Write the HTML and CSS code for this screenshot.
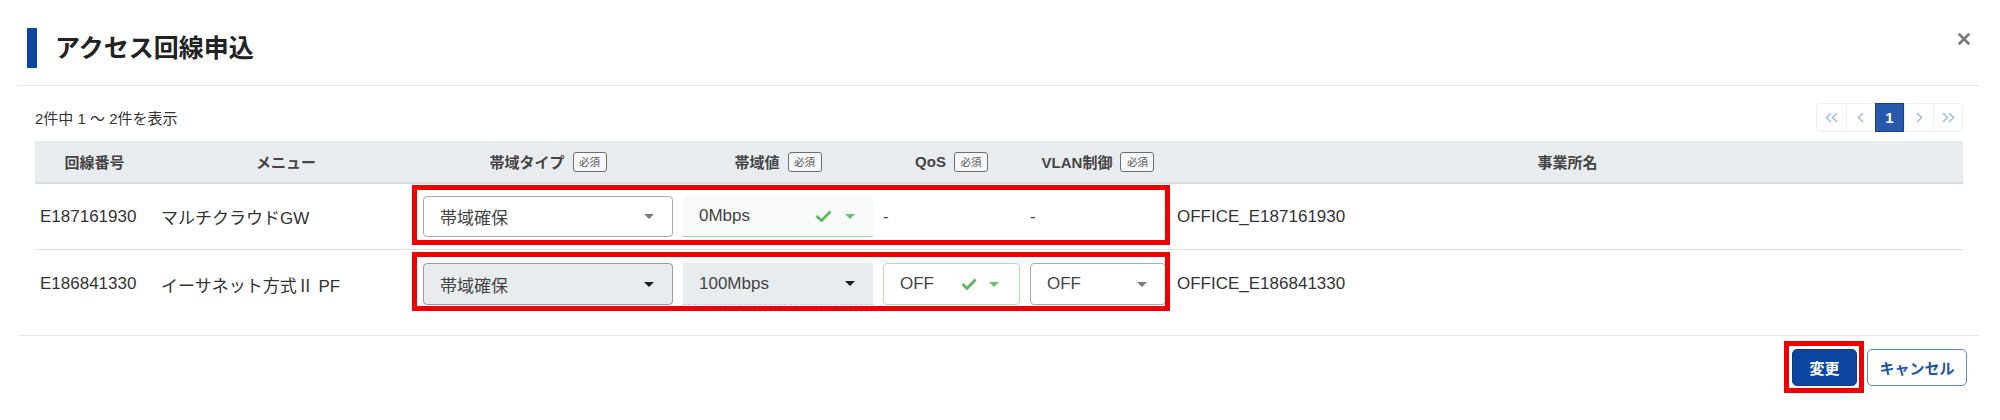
FILE: index.html
```html
<!DOCTYPE html>
<html lang="ja">
<head>
<meta charset="utf-8">
<title>アクセス回線申込</title>
<link rel="stylesheet" href="styles.css">
</head>
<body>
<div class="modal">
  <div class="modal-header">
    <div class="title-bar"></div>
    <h1 class="title">アクセス回線申込</h1>
    <button class="close" aria-label="close">
      <svg width="12" height="12" viewBox="0 0 12 12"><path d="M1.5 1.5 L10.5 10.5 M10.5 1.5 L1.5 10.5" stroke="#7a7a7a" stroke-width="2.6" stroke-linecap="round"/></svg>
    </button>
  </div>
  <div class="modal-body">
    <div class="toolbar">
      <div class="count">2件中 1 ～ 2件を表示</div>
      <div class="pager">
        <span class="pg"><svg width="14" height="11" viewBox="0 0 14 11"><path d="M6 1 L1.5 5.5 L6 10 M12 1 L7.5 5.5 L12 10" stroke="#a6bde4" stroke-width="1.6" fill="none"/></svg></span>
        <span class="pg"><svg width="8" height="11" viewBox="0 0 8 11"><path d="M6 1 L1.5 5.5 L6 10" stroke="#a6bde4" stroke-width="1.6" fill="none"/></svg></span>
        <span class="pg active">1</span>
        <span class="pg"><svg width="8" height="11" viewBox="0 0 8 11"><path d="M2 1 L6.5 5.5 L2 10" stroke="#a6bde4" stroke-width="1.6" fill="none"/></svg></span>
        <span class="pg"><svg width="14" height="11" viewBox="0 0 14 11"><path d="M2 1 L6.5 5.5 L2 10 M8 1 L12.5 5.5 L8 10" stroke="#a6bde4" stroke-width="1.6" fill="none"/></svg></span>
      </div>
    </div>
    <div class="table">
      <div class="thead">
        <div class="c c-id">回線番号</div>
        <div class="c c-menu">メニュー</div>
        <div class="group-h">
          <div class="c c-type">帯域タイプ<span class="badge">必須</span></div>
          <div class="c c-val">帯域値<span class="badge">必須</span></div>
          <div class="c c-qos">QoS<span class="badge">必須</span></div>
          <div class="c c-vlan">VLAN制御<span class="badge">必須</span></div>
        </div>
        <div class="c c-office">事業所名</div>
      </div>
      <div class="row row1">
        <div class="c c-id">E187161930</div>
        <div class="c c-menu">マルチクラウドGW</div>
        <div class="group">
          <div class="c c-type"><div class="sel"><span class="v">帯域確保</span><span class="caret"></span></div></div>
          <div class="c c-val"><div class="sel valid-line"><span class="v">0Mbps</span><svg class="chk" width="20" height="12" viewBox="0 0 20 12"><path d="M1.5 6 L6.5 10.5 L15.5 1.5" stroke="#5cb860" stroke-width="2.8" fill="none"/></svg><span class="caret green"></span></div></div>
          <div class="c c-qos"><span class="dash">-</span></div>
          <div class="c c-vlan"><span class="dash">-</span></div>
        </div>
        <div class="c c-office">OFFICE_E187161930</div>
      </div>
      <div class="row row2">
        <div class="c c-id">E186841330</div>
        <div class="c c-menu">イーサネット方式Ⅱ PF</div>
        <div class="group">
          <div class="c c-type"><div class="sel disabled"><span class="v">帯域確保</span><span class="caret dark"></span></div></div>
          <div class="c c-val"><div class="sel disabled-line"><span class="v">100Mbps</span><span class="caret dark"></span></div></div>
          <div class="c c-qos"><div class="sel valid"><span class="v">OFF</span><svg class="chk" width="18" height="12" viewBox="0 0 18 12"><path d="M1.5 6 L6 10.5 L14.5 1.5" stroke="#5cb860" stroke-width="2.8" fill="none"/></svg><span class="caret green"></span></div></div>
          <div class="c c-vlan"><div class="sel"><span class="v">OFF</span><span class="caret"></span></div></div>
        </div>
        <div class="c c-office">OFFICE_E186841330</div>
      </div>
    </div>
  </div>
  <div class="modal-footer">
    <button class="btn btn-primary">変更</button>
    <button class="btn btn-outline">キャンセル</button>
  </div>
</div>
</body>
</html>
```
FILE: styles.css
```css
* { box-sizing: border-box; }
html, body { margin: 0; padding: 0; background: #fff; }
body {
  font-family: "Liberation Sans", "Noto Sans CJK JP", sans-serif;
  color: #333;
  width: 2000px;
  height: 420px;
  overflow: hidden;
}
.modal {
  margin-left: 19px;
  width: 1960px;
}
.modal-header {
  display: flex;
  align-items: center;
  height: 86px;
  padding-top: 11px;
  padding-left: 8px;
  padding-right: 9px;
  border-bottom: 1px solid #e6e6e6;
}
.title-bar {
  width: 10px;
  height: 40px;
  background: #0b44a0;
}
.title {
  margin: 0 0 0 18px;
  font-size: 25px;
  font-weight: 700;
  color: #222;
  flex: 1;
  line-height: 1;
}
.close {
  align-self: flex-start;
  margin-top: 22px;
  border: 0;
  background: none;
  padding: 0;
  width: 12px;
  height: 12px;
  display: flex;
}
.modal-body {
  padding: 0 16px;
}
.toolbar {
  display: flex;
  justify-content: space-between;
  align-items: center;
  margin-top: 17px;
  margin-bottom: 9px;
  height: 29px;
}
.count {
  font-size: 15px;
  color: #333;
}
.pager {
  display: flex;
  border: 1px solid #eef0f4;
  border-radius: 4px;
  height: 29px;
}
.pg {
  width: 29px;
  height: 27px;
  display: flex;
  align-items: center;
  justify-content: center;
  border-left: 1px solid #eef0f4;
  font-size: 15px;
  font-weight: 700;
}
.pg:first-child { border-left: 0; }
.pg.active {
  background: #2858ac;
  color: #fff;
  border: 1px solid #1b3f85;
  height: 29px;
  margin-top: -1px;
}
.table {
  width: 1928px;
}
.thead {
  display: flex;
  align-items: center;
  height: 43px;
  background: #e9ecef;
  border-bottom: 2px solid #dadee3;
  font-size: 15px;
  font-weight: 700;
  color: #454545;
}
.thead .c {
  justify-content: center;
}
.group-h, .group {
  display: flex;
  align-items: center;
  height: 100%;
}
.c {
  display: flex;
  align-items: center;
  padding: 0 5px;
  height: 100%;
}
.c-id { width: 119px; }
.c-menu { width: 264px; }
.c-type { width: 260px; }
.c-val { width: 200px; }
.c-qos { width: 147px; }
.c-vlan { width: 146px; }
.c-office { flex: 1; padding-left: 6px; }
.row .c-menu { padding-left: 7px; }
.badge {
  display: inline-flex;
  align-items: center;
  justify-content: center;
  width: 34px;
  height: 20px;
  margin-left: 8px;
  border: 1.5px solid #6e6e6e;
  border-radius: 3px;
  background: #f6f7f8;
  font-size: 10.5px;
  font-weight: 400;
  color: #555;
}
.row {
  display: flex;
  align-items: center;
  font-size: 17px;
  color: #333;
}
.row1 { height: 66px; border-bottom: 1px solid #e3e3e3; }
.row2 { height: 68px; }
.group {
  position: relative;
  height: 41px;
}
.group::after {
  content: "";
  position: absolute;
  left: -6px;
  right: 1px;
  top: -11px;
  bottom: -8px;
  border: 5px solid #f00000;
  pointer-events: none;
}
.row2 .group { height: 42px; }
.row2 .group::after { top: -11px; bottom: -6px; }
.sel {
  width: 100%;
  height: 100%;
  display: flex;
  align-items: center;
  padding: 0 18px 0 16px;
  border: 1px solid #ababab;
  border-radius: 4px;
  background: #fff;
  color: #444;
}
.sel .v { flex: 1; }
.sel.valid-line {
  border: 0;
  border-bottom: 1px solid #9cd6a6;
  border-radius: 0;
  background: #f8f9f9;
  padding-left: 16px;
}
.sel.disabled {
  background: #e9ecef;
  border-color: #9a9a9a;
}
.sel.disabled-line {
  border: 0;
  border-bottom: 1px dashed #c9ccd0;
  border-radius: 0;
  background: #e9ecef;
}
.sel.valid {
  border-color: #b1dfb9;
  padding-right: 20px;
}
.chk { margin-right: 10px; }
.caret {
  width: 0;
  height: 0;
  border-left: 5px solid transparent;
  border-right: 5px solid transparent;
  border-top: 5px solid #7a7a7a;
}
.caret.dark { border-top-color: #1e1e1e; }
.caret.green { border-top-color: #6cc279; }
.dash { padding-left: 0; color: #444; }
.modal-footer {
  display: flex;
  justify-content: flex-end;
  gap: 10px;
  margin-top: 17px;
  border-top: 1px solid #e6e6e6;
  padding-top: 13px;
  padding-right: 12px;
}
.btn {
  height: 37px;
  border-radius: 5px;
  font-family: "Liberation Sans", "Noto Sans CJK JP", sans-serif;
  font-size: 15px;
  font-weight: 700;
  padding: 0;
}
.btn-primary {
  position: relative;
  width: 65px;
  background: #0c45a0;
  border: 1px solid #0a3a88;
  color: #fff;
}
.btn-primary::after {
  content: "";
  position: absolute;
  left: -9px;
  right: -8px;
  top: -9px;
  bottom: -8px;
  border: 5px solid #f00000;
  pointer-events: none;
}
.btn-outline {
  width: 100px;
  background: #fff;
  border: 1.5px solid #5d88cd;
  color: #1f55a8;
}
```
